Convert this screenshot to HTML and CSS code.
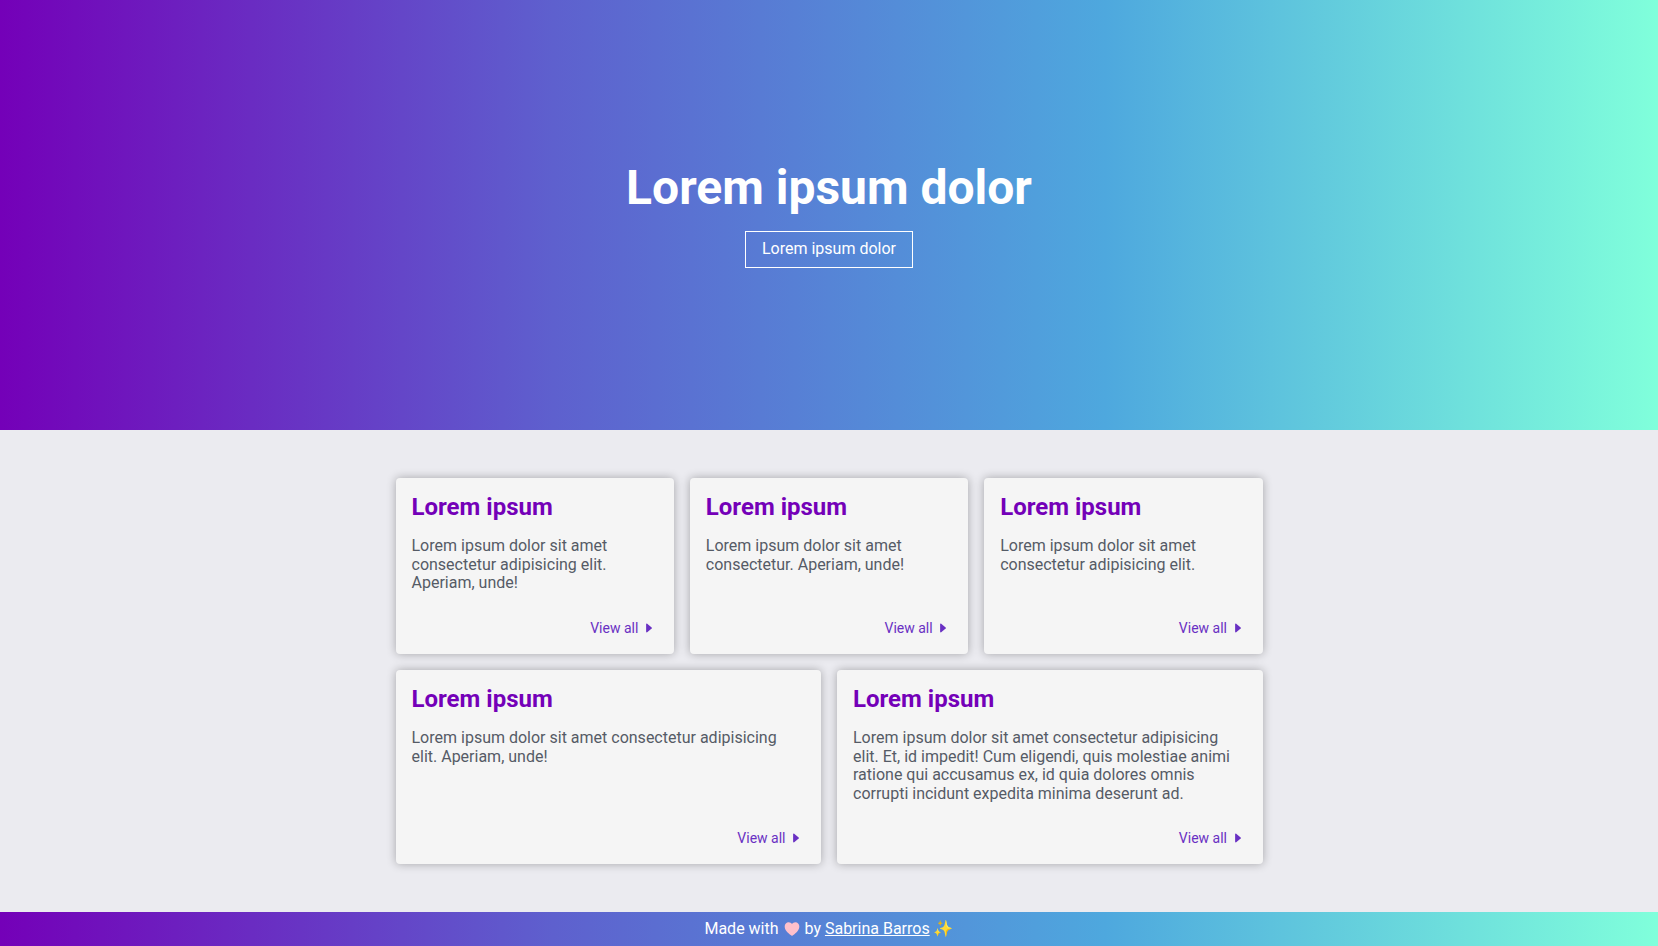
FILE: index.html
```html
<!DOCTYPE html>
<html lang="en">
<head>
<meta charset="utf-8">
<meta name="viewport" content="width=device-width, initial-scale=1">
<title>Lorem ipsum dolor</title>
<link rel="stylesheet" href="styles.css">
</head>
<body>
<svg class="sprite" aria-hidden="true">
  <symbol id="caret" viewBox="0 0 512 512"><path d="M190.06 414l163.12-139.78a24 24 0 000-36.44L190.06 98c-15.57-13.34-39.06-2.39-39.06 16.72v282.56c0 19.11 23.49 30.06 39.06 16.72z"/></symbol>
  <symbol id="heart" viewBox="0 0 512 512"><path d="M256 448a32 32 0 01-18-5.57c-78.59-53.35-112.62-89.93-131.39-112.8-40-48.75-59.15-98.8-58.61-153C48.63 114.52 98.46 64 159.08 64c44.08 0 74.61 24.83 92.39 45.51a6 6 0 009.06 0C278.31 88.81 308.84 64 352.92 64c60.62 0 110.45 50.52 111.08 112.64.54 54.21-18.63 104.26-58.61 153-18.77 22.87-52.8 59.45-131.39 112.8A32 32 0 01256 448z"/></symbol>
</svg>
<header class="hero">
  <h1 class="hero-title">Lorem ipsum dolor</h1>
  <a class="hero-link" href="#cards">Lorem ipsum dolor</a>
</header>
<main class="cards" id="cards">
  <article class="card">
    <h2 class="card-title">Lorem ipsum</h2>
    <p class="card-text">Lorem ipsum dolor sit amet consectetur adipisicing elit. Aperiam, unde!</p>
    <a class="card-link" href="#">View all <svg class="icon" aria-hidden="true"><use href="#caret"/></svg></a>
  </article>
  <article class="card">
    <h2 class="card-title">Lorem ipsum</h2>
    <p class="card-text">Lorem ipsum dolor sit amet consectetur. Aperiam, unde!</p>
    <a class="card-link" href="#">View all <svg class="icon" aria-hidden="true"><use href="#caret"/></svg></a>
  </article>
  <article class="card">
    <h2 class="card-title">Lorem ipsum</h2>
    <p class="card-text">Lorem ipsum dolor sit amet consectetur adipisicing elit.</p>
    <a class="card-link" href="#">View all <svg class="icon" aria-hidden="true"><use href="#caret"/></svg></a>
  </article>
  <article class="card card-wide">
    <h2 class="card-title">Lorem ipsum</h2>
    <p class="card-text">Lorem ipsum dolor sit amet consectetur adipisicing elit. Aperiam, unde!</p>
    <a class="card-link" href="#">View all <svg class="icon" aria-hidden="true"><use href="#caret"/></svg></a>
  </article>
  <article class="card card-wide">
    <h2 class="card-title">Lorem ipsum</h2>
    <p class="card-text">Lorem ipsum dolor sit amet consectetur adipisicing elit. Et, id impedit! Cum eligendi, quis molestiae animi ratione qui accusamus ex, id quia dolores omnis corrupti incidunt expedita minima deserunt ad.</p>
    <a class="card-link" href="#">View all <svg class="icon" aria-hidden="true"><use href="#caret"/></svg></a>
  </article>
</main>
<footer class="footer">
  <p class="footer-text">Made with <svg class="icon icon-heart" role="img" aria-label="love"><use href="#heart"/></svg> by <a class="footer-link" href="#">Sabrina Barros</a> ✨</p>
</footer>
</body>
</html>
```

FILE: styles.css
```css
:root {
  --gradient: linear-gradient(to right, #7400b8, #5e60ce, #4ea8de, #80ffdb);
}

* {
  box-sizing: border-box;
  margin: 0;
  padding: 0;
}

body {
  display: flex;
  flex-direction: column;
  min-height: 100vh;
  background: #ebebf0;
  color: #555b66;
  font-family: Roboto, "Noto Color Emoji", sans-serif;
  font-size: 16px;
  line-height: 1.15;
}

.sprite {
  display: none;
}

.icon {
  width: 1em;
  height: 1em;
  fill: currentColor;
  vertical-align: -2px;
}

.hero {
  display: flex;
  flex-direction: column;
  flex-grow: 1;
  align-items: center;
  gap: 16px;
  padding: 160px 16px;
  background: var(--gradient);
  color: #fff;
}

.hero-title {
  font-size: 48px;
  text-align: center;
}

.hero-link {
  padding: 8px 16px;
  border: 1px solid #fff;
  color: #fff;
  text-decoration: none;
}

.cards {
  display: grid;
  grid-template-columns: repeat(6, 1fr);
  gap: 16px;
  width: 100%;
  max-width: 899px;
  margin: 0 auto;
  padding: 48px 16px;
}

.card {
  display: flex;
  flex-direction: column;
  grid-column: span 2;
  padding: 16px;
  border-radius: 4px;
  background: #f5f5f5;
  box-shadow: 0 0 10px rgba(0, 0, 0, 0.3);
}

.card-wide {
  grid-column: span 3;
}

.card-title {
  margin-bottom: 16px;
  color: #7400b8;
  font-size: 24px;
}

.card-text {
  margin-bottom: 24px;
}

.card-link {
  align-self: flex-end;
  margin-top: auto;
  padding: 3px 2px 2px;
  color: #6930c3;
  font-size: 14px;
  text-decoration: none;
}

.footer {
  padding: 8px;
  background: var(--gradient);
  color: #fff;
  line-height: 18px;
  text-align: center;
}

.icon-heart {
  width: 18px;
  height: 18px;
  margin: -2px 0;
  fill: pink;
  vertical-align: -2px;
}

.footer-link {
  color: #fff;
}

@media (max-width: 700px) {
  .card,
  .card-wide {
    grid-column: span 6;
  }
}
```
